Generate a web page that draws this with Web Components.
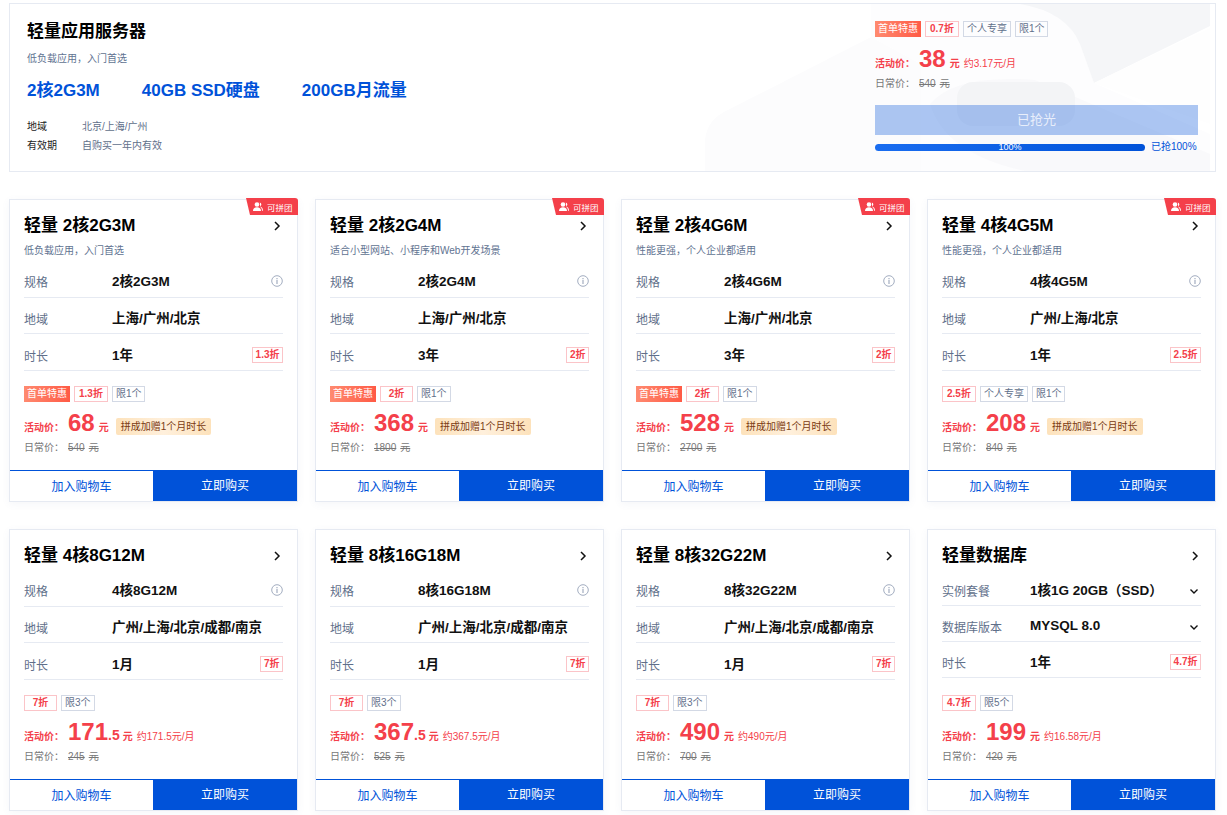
<!DOCTYPE html>
<html lang="zh">
<head>
<meta charset="utf-8">
<title>轻量应用服务器</title>
<style>
  html, body { margin: 0; background: #fff; }
  body {
    font-family: "Liberation Sans", "Noto Sans CJK SC", sans-serif;
    color: #000;
    width: 1227px;
    height: 815px;
    overflow: hidden;
  }
  #page { padding: 3px 11px 0 9px; display: flex; flex-direction: column; gap: 27px; }
  #grid { display: grid; grid-template-columns: repeat(4, 289px); column-gap: 17px; grid-template-rows: 303px 282px; row-gap: 27px; }
</style>
</head>
<body>
<div id="page">
  <hero-panel>
    <promo-tag slot="tags" kind="first">首单特惠</promo-tag>
    <promo-tag slot="tags" kind="off">0.7折</promo-tag>
    <promo-tag slot="tags">个人专享</promo-tag>
    <promo-tag slot="tags">限1个</promo-tag>
    <price-block slot="price" now="38" note="约3.17元/月" old="540"></price-block>
  </hero-panel>
  <div id="grid"></div>
</div>

<script>
class PromoTag extends HTMLElement {
  constructor() {
    super();
    this.attachShadow({ mode: "open" });
    this.shadowRoot.innerHTML = `
      <style>
        :host {
          display: inline-flex;
          align-items: center;
          justify-content: center;
          box-sizing: border-box;
          height: 16px;
          padding: 0 3px;
          font-size: 10px;
          line-height: 14px;
          white-space: nowrap;
          color: #5f6f8a;
          border: 1px solid #d3d9e5;
        }
        :host([kind="off"]) {
          color: #f4404a;
          font-weight: bold;
          border-color: #fbc4c8;
          min-width: 33px;
          padding: 0 4px;
        }
        :host([kind="first"]) {
          color: #fff;
          border: 0;
          padding: 0 3px;
          background: linear-gradient(90deg, #ff8a70, #ff5a45);
        }
        :host([mini]) {
          min-width: 0;
          padding: 0 2.5px;
        }
      </style>
      <slot></slot>
    `;
  }
}

class PriceBlock extends HTMLElement {
  constructor() {
    super();
    this.attachShadow({ mode: "open" });
  }

  connectedCallback() {
    const now = this.getAttribute("now");
    const cents = this.getAttribute("cents");
    const note = this.getAttribute("note");
    const gift = this.getAttribute("gift");
    const old = this.getAttribute("old");
    this.shadowRoot.innerHTML = `
      <style>
        :host { display: block; }
        .now { display: flex; align-items: baseline; height: 25px; color: #f4404a; }
        .lbl { font-size: 10px; font-weight: bold; width: 44px; }
        b { font-size: 24px; line-height: 25px; margin-right: 4px; }
        .cents { font-size: 14px; font-weight: bold; margin-left: -4px; margin-right: 3px; }
        .unit { font-size: 10px; font-weight: bold; }
        .note { font-size: 10px; margin-left: 4px; }
        .gift {
          align-self: center;
          margin-left: 7px;
          margin-top: 7px;
          height: 17px;
          line-height: 17px;
          padding: 0 5px;
          font-size: 10px;
          color: #7a3a12;
          border-radius: 2px;
          background: linear-gradient(90deg, #fde2bb, #fff0dc 50%, #fde2bb);
        }
        .old { display: flex; align-items: baseline; margin-top: 4px; height: 14px; font-size: 10px; color: #777; }
        .old span:first-child { width: 44px; }
        s { margin-right: 4px; }
      </style>
      <div class="now">
        <span class="lbl">活动价：</span>
        <b>${now}</b>${cents ? `<span class="cents">${cents}</span>` : ""}
        <span class="unit">元</span>
        ${note ? `<span class="note">${note}</span>` : ""}
        ${gift ? `<span class="gift">${gift}</span>` : ""}
      </div>
      <div class="old"><span>日常价：</span><s>${old}</s><s>元</s></div>
    `;
  }
}

class HeroPanel extends HTMLElement {
  constructor() {
    super();
    this.attachShadow({ mode: "open" });
    this.shadowRoot.innerHTML = `
      <style>
        :host {
          display: block;
          position: relative;
          box-sizing: border-box;
          height: 169px;
          border: 1px solid #e6eaf2;
          overflow: hidden;
          background: #fff;
        }
        svg { position: absolute; right: 0; top: 0; }
        .wrap { position: relative; display: flex; justify-content: space-between; height: 100%; }
        .left { padding: 18px 0 0 17px; }
        h2 { margin: 0; font-size: 17px; line-height: 20px; font-weight: bold; }
        .sub { margin-top: 10px; font-size: 10px; line-height: 14px; color: #5f7391; }
        .feats {
          display: flex;
          gap: 42px;
          margin-top: 15px;
          font-size: 17px;
          line-height: 20px;
          font-weight: bold;
          color: #0052d9;
        }
        dl { display: grid; grid-template-columns: 55px auto; row-gap: 5px; margin: 19px 0 0; font-size: 10px; line-height: 14px; }
        dt { color: #222; }
        dd { margin: 0; color: #5f6f8a; }
        .right { width: 340px; padding-top: 17px; box-sizing: border-box; }
        .tags { display: flex; gap: 4px; }
        .price { margin-top: 9px; }
        .btn {
          margin-top: 16px;
          width: 323px;
          height: 30px;
          line-height: 30px;
          text-align: center;
          font-size: 13px;
          color: #e8eefb;
          background: rgba(0, 82, 217, 0.32);
        }
        .bar { display: flex; align-items: center; margin-top: 5px; width: 340px; }
        .track {
          width: 270px;
          height: 7px;
          line-height: 7px;
          border-radius: 4px;
          font-size: 9px;
          text-align: center;
          color: #fff;
          background: linear-gradient(90deg, #1a6df0, #0052d9);
        }
        .pct { margin-left: 6px; font-size: 10px; line-height: 14px; color: #0052d9; }
      </style>
      <svg width="520" height="167" viewBox="0 0 520 167" fill="none">
        <path d="M10 167 V136 Q12 115 33 106 L176 33 L226 60 V167 Z" fill="#fcfcfd"/>
        <path d="M176 0 H340 Q372 6 385 40 L399 79 L515 130 V167 H226 V60 L176 33 Z" fill="#fdfdfe"/>
        <path d="M325 0 H515 V22 L399 79 L385 40 Q372 8 325 0 Z" fill="#f5f6f8"/>
        <path d="M399 79 L515 24 V120 L399 79 Z" fill="#fefefe"/>
        <path d="M235 100 Q260 70 340 76 L515 150 V167 H330 Q250 150 235 100 Z" fill="#f9f9fb"/>
        <rect x="262" y="78" width="118" height="44" rx="16" fill="#f3f4f6"/>
      </svg>
      <div class="wrap">
        <div class="left">
          <h2>轻量应用服务器</h2>
          <div class="sub">低负载应用，入门首选</div>
          <div class="feats"><span>2核2G3M</span><span>40GB SSD硬盘</span><span>200GB月流量</span></div>
          <dl>
            <dt>地域</dt><dd>北京/上海/广州</dd>
            <dt>有效期</dt><dd>自购买一年内有效</dd>
          </dl>
        </div>
        <div class="right">
          <div class="tags"><slot name="tags"></slot></div>
          <div class="price"><slot name="price"></slot></div>
          <div class="btn">已抢光</div>
          <div class="bar"><div class="track">100%</div><span class="pct">已抢100%</span></div>
        </div>
      </div>
    `;
  }
}

class SpecRow extends HTMLElement {
  constructor() {
    super();
    this.attachShadow({ mode: "open" });
  }

  connectedCallback() {
    const end = this.getAttribute("end");
    let endHtml = "";
    if (end === "info") {
      endHtml = `<svg class="ico" width="12" height="12" viewBox="0 0 12 12" fill="none" stroke="#a3adc0">
        <circle cx="6" cy="6" r="5.3"/><path d="M6 5v4M6 3v1.2" stroke-width="1.2"/></svg>`;
    } else if (end === "down") {
      endHtml = `<svg class="down" width="10" height="10" viewBox="0 0 10 10" fill="none" stroke="#111" stroke-width="1.4">
        <path d="M1.5 3.5 5 7l3.5-3.5"/></svg>`;
    } else if (end) {
      endHtml = `<promo-tag kind="off" mini>${end}</promo-tag>`;
    }
    this.shadowRoot.innerHTML = `
      <style>
        :host {
          display: flex;
          align-items: center;
          box-sizing: border-box;
          height: var(--row-h, 36.7px);
          padding-top: 3px;
          border-bottom: 1px solid #e6eaf2;
        }
        .lbl { width: 88px; flex: none; font-size: 12px; color: #5f6f8a; margin-top: 3px; }
        .val { flex: 1; font-size: 13.5px; font-weight: bold; color: #111; white-space: nowrap; }
        .ico { margin-top: 1px; }
        .down { margin: 4px 2px 0 0; }
        promo-tag { margin-top: 2px; }
      </style>
      <span class="lbl">${this.getAttribute("label")}</span>
      <span class="val"><slot></slot></span>
      ${endHtml}
    `;
  }
}

class SaleCard extends HTMLElement {
  constructor() {
    super();
    this.attachShadow({ mode: "open" });
    this.shadowRoot.innerHTML = `
      <style>
        :host {
          display: flex;
          flex-direction: column;
          position: relative;
          box-sizing: border-box;
          border: 1px solid #e6eaf2;
          background: #fff;
          box-shadow: 0 2px 8px rgba(80, 100, 160, 0.06);
        }
        .badge {
          position: absolute;
          top: -2px;
          right: -1px;
          width: 52px;
          height: 17px;
          padding-left: 7px;
          box-sizing: border-box;
          display: flex;
          align-items: center;
          gap: 3px;
          font-size: 8.5px;
          color: #fff;
          background: #f4404a;
          border-top-right-radius: 3px;
          clip-path: polygon(0 0, 100% 0, 100% 100%, 4px 100%);
        }
        :host(:not([group])) .badge { display: none; }
        .body { flex: 1; display: flex; flex-direction: column; padding: 0 14px; }
        .head { display: flex; align-items: center; justify-content: space-between; margin-top: 16px; height: 20px; }
        h3 { margin: 0; font-size: 17px; line-height: 20px; font-weight: bold; }
        .head svg { margin-right: 2px; }
        .sub { font-size: 10px; line-height: 13px; margin-top: 8px; color: #5f7391; }
        :host(:not([sub])) .sub { display: none; }
        .rows { display: flex; flex-direction: column; margin-top: 4px; }
        .tags { display: flex; gap: 4px; margin-top: auto; }
        .price { margin-top: 8px; padding-bottom: 17px; }
        .btns { display: flex; height: 31px; font-size: 12px; }
        .btns div { display: flex; align-items: center; justify-content: center; padding-bottom: 2px; box-sizing: border-box; }
        .add { width: 143px; flex: none; color: #0052d9; border-top: 1px solid #0052d9; }
        .buy { flex: 1; color: #fff; background: #0052d9; }
      </style>
      <div class="badge">
        <svg width="11" height="9" viewBox="0 0 11 9" fill="#fff"><circle cx="4" cy="2.5" r="2.3"/><path d="M0 9c0-2.6 1.6-3.8 4-3.8S8 6.4 8 9Z"/><path d="M6.8.4a2.2 2.2 0 0 1 0 4.2c2 .4 3.2 1.7 3.2 4.1H9c0-1.6-.6-2.8-1.7-3.6Z"/></svg>
        <span>可拼团</span>
      </div>
      <div class="body">
        <div class="head">
          <h3></h3>
          <svg width="8" height="10" viewBox="0 0 8 10" fill="none" stroke="#111" stroke-width="1.5"><path d="M2 1l4 4-4 4"/></svg>
        </div>
        <div class="sub"></div>
        <div class="rows"><slot name="rows"></slot></div>
        <div class="tags"><slot name="tags"></slot></div>
        <div class="price"><slot name="price"></slot></div>
      </div>
      <div class="btns"><div class="add">加入购物车</div><div class="buy">立即购买</div></div>
    `;
  }

  connectedCallback() {
    this.shadowRoot.querySelector("h3").textContent = this.getAttribute("heading");
    this.shadowRoot.querySelector(".sub").textContent = this.getAttribute("sub");
  }
}

customElements.define("promo-tag", PromoTag);
customElements.define("price-block", PriceBlock);
customElements.define("hero-panel", HeroPanel);
customElements.define("spec-row", SpecRow);
customElements.define("sale-card", SaleCard);

const GIFT = "拼成加赠1个月时长";
const CITIES = "广州/上海/北京/成都/南京";

const cards = [
  { heading: "轻量 2核2G3M", sub: "低负载应用，入门首选", spec: "2核2G3M", area: "上海/广州/北京", time: "1年", off: "1.3折", tags: ["first", "限1个"], now: "68", gift: GIFT, old: "540" },
  { heading: "轻量 2核2G4M", sub: "适合小型网站、小程序和Web开发场景", spec: "2核2G4M", area: "上海/广州/北京", time: "3年", off: "2折", tags: ["first", "限1个"], now: "368", gift: GIFT, old: "1800" },
  { heading: "轻量 2核4G6M", sub: "性能更强，个人企业都适用", spec: "2核4G6M", area: "上海/广州/北京", time: "3年", off: "2折", tags: ["first", "限1个"], now: "528", gift: GIFT, old: "2700" },
  { heading: "轻量 4核4G5M", sub: "性能更强，个人企业都适用", spec: "4核4G5M", area: "广州/上海/北京", time: "1年", off: "2.5折", tags: ["个人专享", "限1个"], now: "208", gift: GIFT, old: "840" },
  { heading: "轻量 4核8G12M", spec: "4核8G12M", area: CITIES, time: "1月", off: "7折", tags: ["限3个"], now: "171", cents: ".5", note: "约171.5元/月", old: "245" },
  { heading: "轻量 8核16G18M", spec: "8核16G18M", area: CITIES, time: "1月", off: "7折", tags: ["限3个"], now: "367", cents: ".5", note: "约367.5元/月", old: "525" },
  { heading: "轻量 8核32G22M", spec: "8核32G22M", area: CITIES, time: "1月", off: "7折", tags: ["限3个"], now: "490", note: "约490元/月", old: "700" },
  { heading: "轻量数据库", db: true, time: "1年", off: "4.7折", tags: ["限5个"], now: "199", note: "约16.58元/月", old: "420" },
];

const grid = document.getElementById("grid");

cards.forEach((c) => {
  const card = document.createElement("sale-card");
  card.setAttribute("heading", c.heading);
  if (c.sub) {
    card.setAttribute("sub", c.sub);
    card.setAttribute("group", "");
  }

  const rows = c.db
    ? `<spec-row slot="rows" style="--row-h:36px" label="实例套餐" end="down">1核1G 20GB（SSD）</spec-row>
       <spec-row slot="rows" style="--row-h:36px" label="数据库版本" end="down">MYSQL 8.0</spec-row>`
    : `<spec-row slot="rows" label="规格" end="info">${c.spec}</spec-row>
       <spec-row slot="rows" label="地域">${c.area}</spec-row>`;

  const tags = c.tags.map((t) => {
    if (t === "first") return `<promo-tag slot="tags" kind="first">首单特惠</promo-tag><promo-tag slot="tags" kind="off">${c.off}</promo-tag>`;
    return `<promo-tag slot="tags">${t}</promo-tag>`;
  });
  if (c.tags[0] !== "first") tags.unshift(`<promo-tag slot="tags" kind="off">${c.off}</promo-tag>`);

  const extra = [
    ["cents", c.cents],
    ["note", c.note],
    ["gift", c.gift],
  ].filter((p) => p[1]).map((p) => `${p[0]}="${p[1]}"`).join(" ");

  const lastRowStyle = c.db ? `style="--row-h:36px"` : "";

  card.innerHTML = `
    ${rows}
    <spec-row slot="rows" ${lastRowStyle} label="时长" end="${c.off}">${c.time}</spec-row>
    ${tags.join("")}
    <price-block slot="price" now="${c.now}" old="${c.old}" ${extra}></price-block>
  `;
  grid.appendChild(card);
});
</script>
</body>
</html>
